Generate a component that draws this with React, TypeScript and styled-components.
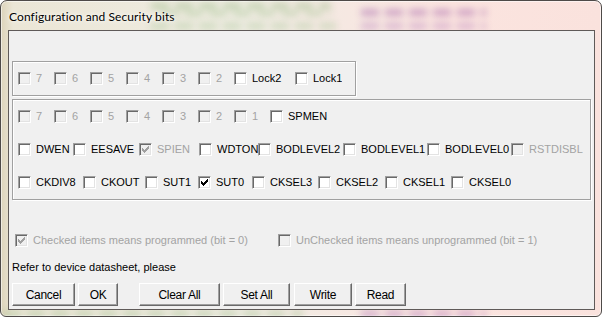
import styled, { createGlobalStyle } from 'styled-components';

const GlobalStyle = createGlobalStyle`
  html, body {
    margin: 0;
    padding: 0;
    background: #ffffff;
    overflow: hidden;
  }
  body {
    font-family: "Liberation Sans", Arial, sans-serif;
  }
`;

const Frame = styled.div`
  position: relative;
  box-sizing: border-box;
  width: 602px;
  height: 317px;
  border: 1px solid #4e4a48;
  border-radius: 7px 7px 6px 6px;
  background: linear-gradient(90deg, #ddd4bb 0%, #ebe6d6 2%, #efece2 40%, #f6e8e2 58%, #fbe4df 75%, #fae2dd 100%);
  box-shadow: inset 0 0 0 1px rgba(255, 255, 255, 0.55);
  padding: 0 6px 6px 7px;
  display: flex;
  flex-direction: column;
  overflow: hidden;
`;

/* blurred content seen through the glass frame */
const Backdrop = styled.div`
  position: absolute;
  inset: 0;
  z-index: 0;
  filter: blur(3.5px);
  pointer-events: none;
`;

const Smear = styled.span<{ $x: number; $y: number; $w: number; $h: number; $c: string }>`
  position: absolute;
  left: ${(p) => p.$x}px;
  top: ${(p) => p.$y}px;
  width: ${(p) => p.$w}px;
  height: ${(p) => p.$h}px;
  background: repeating-linear-gradient(90deg, ${(p) => p.$c} 0 18px, transparent 18px 24px);
  opacity: 0.45;
`;

const TitleBar = styled.div`
  position: relative;
  z-index: 1;
  height: 29px;
  display: flex;
  align-items: center;
  padding: 1px 0 0 1px;
  box-sizing: border-box;
  font-family: Lato, "Open Sans", sans-serif;
  font-size: 12px;
  letter-spacing: 0.1px;
  color: #000;
  text-shadow: 0 0 6px rgba(255, 255, 255, 0.95), 0 0 3px rgba(255, 255, 255, 0.9);
`;

const Client = styled.div`
  position: relative;
  z-index: 1;
  flex: 1;
  border: 1px solid #5f5a58;
  background: #f0f0f0;
  padding: 30px 3px 0 3px;
  display: flex;
  flex-direction: column;
  align-items: flex-start;
  font-size: 11px;
  line-height: 13px;
  color: #000;
`;

const Group = styled.div<{ $w?: number; $gap?: number }>`
  box-sizing: border-box;
  width: ${(p) => (p.$w ? `${p.$w}px` : '100%')};
  margin-top: ${(p) => p.$gap ?? 0}px;
  border: 1px solid #a0a0a0;
  box-shadow: inset 1px 1px 0 #ffffff, 1px 1px 0 #ffffff;
  padding: 10px 5px;
  display: flex;
  flex-direction: column;
  gap: 20px;
`;

const Row = styled.div`
  display: flex;
  height: 13px;
`;

const Item = styled.div<{ $w?: number }>`
  flex: none;
  width: ${(p) => (p.$w ? `${p.$w}px` : 'auto')};
  display: flex;
  align-items: center;
  overflow: hidden;
  white-space: nowrap;
`;

const Box = styled.span<{ $off?: boolean }>`
  flex: none;
  box-sizing: border-box;
  width: 13px;
  height: 13px;
  border-style: solid;
  border-width: 1px;
  border-color: #a0a0a0 #ffffff #ffffff #a0a0a0;
  box-shadow: inset 1px 1px 0 #696969, inset -1px -1px 0 #e3e3e3;
  background: ${(p) => (p.$off ? '#f0f0f0' : '#ffffff')};
  position: relative;
  svg {
    position: absolute;
    left: -1px;
    top: -1px;
  }
`;

const Label = styled.span<{ $off?: boolean }>`
  margin-left: 5px;
  color: ${(p) => (p.$off ? '#a3a3a3' : '#000')};
`;

const Legend = styled.div`
  display: flex;
  height: 13px;
  margin-top: 34px;
  padding-left: 3px;
`;

const Note = styled.div`
  margin-top: 14px;
`;

const Buttons = styled.div`
  display: flex;
  margin-top: 9px;
`;

const Button = styled.button<{ $w: number; $ml?: number }>`
  box-sizing: border-box;
  width: ${(p) => p.$w}px;
  height: 23px;
  margin: 0 0 0 ${(p) => p.$ml ?? 0}px;
  padding: 0;
  font-family: "Liberation Sans", Arial, sans-serif;
  font-size: 12px;
  letter-spacing: -0.3px;
  color: #000;
  background: #f0f0f0;
  border-style: solid;
  border-width: 1px;
  border-color: #ffffff #696969 #696969 #ffffff;
  box-shadow: inset -1px -1px 0 #a0a0a0, inset 1px 1px 0 #f0f0f0;
`;

function Tick({ off }: { off?: boolean }) {
  return (
    <svg width="13" height="13" viewBox="0 0 13 13">
      <path
        d="M3 5h1v3H3zM4 6h1v3H4zM5 7h1v3H5zM6 6h1v3H6zM7 5h1v3H7zM8 4h1v3H8zM9 3h1v3H9z"
        fill={off ? '#a0a0a0' : '#000'}
      />
    </svg>
  );
}

type Bit = { label: string; w?: number; off?: boolean; on?: boolean };

function Check({ label, w, off, on }: Bit) {
  return (
    <Item $w={w}>
      <Box $off={off}>{on && <Tick off={off} />}</Box>
      <Label $off={off}>{label}</Label>
    </Item>
  );
}

const lockRow: Bit[] = [
  ...['7', '6', '5', '4', '3', '2'].map((l) => ({ label: l, w: 36, off: true })),
  { label: 'Lock2', w: 61 },
  { label: 'Lock1' },
];

const rowA: Bit[] = [
  ...['7', '6', '5', '4', '3', '2', '1'].map((l) => ({ label: l, w: 36, off: true })),
  { label: 'SPMEN' },
];

const rowB: Bit[] = [
  { label: 'DWEN', w: 55 },
  { label: 'EESAVE', w: 66 },
  { label: 'SPIEN', w: 60, off: true, on: true },
  { label: 'WDTON', w: 59 },
  { label: 'BODLEVEL2', w: 85 },
  { label: 'BODLEVEL1', w: 84 },
  { label: 'BODLEVEL0', w: 84 },
  { label: 'RSTDISBL', off: true },
];

const rowC: Bit[] = [
  { label: 'CKDIV8', w: 65 },
  { label: 'CKOUT', w: 62 },
  { label: 'SUT1', w: 53 },
  { label: 'SUT0', w: 54, on: true },
  { label: 'CKSEL3', w: 66 },
  { label: 'CKSEL2', w: 67 },
  { label: 'CKSEL1', w: 66 },
  { label: 'CKSEL0' },
];

const smears = [
  { x: 150, y: 2, w: 180, h: 6, c: '#8fb57a' },
  { x: 160, y: 10, w: 170, h: 5, c: '#9cc08a' },
  { x: 150, y: 22, w: 185, h: 6, c: '#a6c696' },
  { x: 360, y: 8, w: 125, h: 7, c: '#a05aa8' },
  { x: 360, y: 22, w: 125, h: 6, c: '#b57cbc' },
  { x: 2, y: 310, w: 300, h: 6, c: '#98b883' },
  { x: 360, y: 310, w: 125, h: 6, c: '#a560ad' },
];

export default function App() {
  return (
    <>
      <GlobalStyle />
      <Frame>
        <Backdrop>
          {smears.map((s, i) => (
            <Smear key={i} $x={s.x} $y={s.y} $w={s.w} $h={s.h} $c={s.c} />
          ))}
        </Backdrop>
        <TitleBar>Configuration and Security bits</TitleBar>
        <Client>
          <Group $w={344}>
            <Row>
              {lockRow.map((b) => (
                <Check key={b.label} {...b} />
              ))}
            </Row>
          </Group>
          <Group $gap={3}>
            {[rowA, rowB, rowC].map((row, i) => (
              <Row key={i}>
                {row.map((b) => (
                  <Check key={b.label} {...b} />
                ))}
              </Row>
            ))}
          </Group>
          <Legend>
            <Check label="Checked items means programmed (bit = 0)" w={263} off on />
            <Check label="UnChecked items means unprogrammed (bit = 1)" off />
          </Legend>
          <Note>Refer to device datasheet, please</Note>
          <Buttons>
            <Button $w={63}>Cancel</Button>
            <Button $w={40} $ml={3}>OK</Button>
            <Button $w={81} $ml={21}>Clear All</Button>
            <Button $w={67} $ml={3}>Set All</Button>
            <Button $w={58} $ml={4}>Write</Button>
            <Button $w={51} $ml={3}>Read</Button>
          </Buttons>
        </Client>
      </Frame>
    </>
  );
}
